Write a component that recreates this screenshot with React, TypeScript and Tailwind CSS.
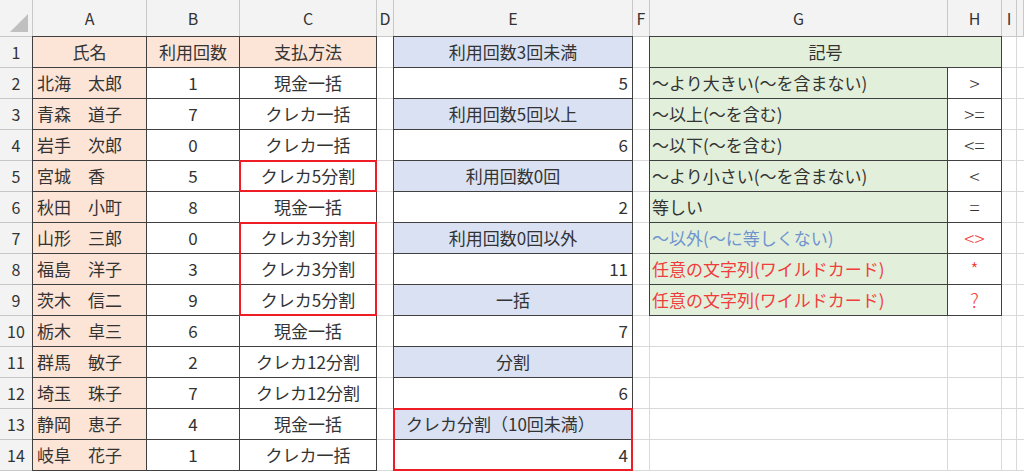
import React from "react";

const names = ["北海　太郎","青森　道子","岩手　次郎","宮城　香","秋田　小町","山形　三郎","福島　洋子","茨木　信二","栃木　卓三","群馬　敏子","埼玉　珠子","静岡　恵子","岐阜　花子"];
const counts = ["1","7","0","5","8","0","3","9","6","2","7","4","1"];
const pays = ["現金一括","クレカ一括","クレカ一括","クレカ5分割","現金一括","クレカ3分割","クレカ3分割","クレカ5分割","現金一括","クレカ12分割","クレカ12分割","現金一括","クレカ一括"];
const eCol: [string, boolean][] = [
  ["利用回数3回未満", true],["5", false],["利用回数5回以上", true],["6", false],["利用回数0回", true],["2", false],
  ["利用回数0回以外", true],["11", false],["一括", true],["7", false],["分割", true],["6", false],["クレカ分割（10回未満）", true],["4", false],
];
const gRows: [string, string, string][] = [
  ["〜より大きい(〜を含まない)", ">", "n"],
  ["〜以上(〜を含む)", ">=", "n"],
  ["〜以下(〜を含む)", "<=", "n"],
  ["〜より小さい(〜を含まない)", "<", "n"],
  ["等しい", "=", "n"],
  ["〜以外(〜に等しくない)", "<>", "b"],
  ["任意の文字列(ワイルドカード)", "*", "r"],
  ["任意の文字列(ワイルドカード)", "?", "r"],
];

const base = "border-r border-b border-[#d9d9d9] flex items-center overflow-hidden whitespace-nowrap";
const dark = "border-r border-b border-[#404040] flex items-center overflow-hidden whitespace-nowrap";
const hdr = "border-r border-b border-[#c8c8c8] bg-[#f3f3f3] flex items-center justify-center text-[16px] text-[#333]";

export default function App() {
  const cells: React.ReactNode[] = [];
  const cols = ["A","B","C","D","E","F","G","H","I",""];
  cells.push(<div key="corner" className={hdr + " relative"}><div className="absolute right-1 bottom-1 w-0 h-0 border-l-[18px] border-l-transparent border-b-[18px] border-b-[#c0c0c0]" /></div>);
  cols.forEach((c, i) => cells.push(<div key={"h" + i} className={hdr}>{c}</div>));
  for (let r = 1; r <= 14; r++) {
    cells.push(<div key={"r" + r} className={hdr}>{r}</div>);
    if (r === 1) {
      cells.push(<div key="a1" className={dark + " justify-center bg-[#fce4d6]"}>氏名</div>);
      cells.push(<div key="b1" className={dark + " justify-center bg-[#fce4d6]"}>利用回数</div>);
      cells.push(<div key="c1" className={dark + " justify-center bg-[#fce4d6]"}>支払方法</div>);
    } else {
      cells.push(<div key={"a" + r} className={dark + " pl-1 bg-[#fce4d6]"}>{names[r - 2]}</div>);
      cells.push(<div key={"b" + r} className={dark + " justify-center"}>{counts[r - 2]}</div>);
      cells.push(<div key={"c" + r} className={dark + " justify-center"}>{pays[r - 2]}</div>);
    }
    cells.push(<div key={"d" + r} className={base} />);
    const [et, eh] = eCol[r - 1];
    cells.push(
      <div key={"e" + r} className={dark + (eh ? (r === 13 ? " pl-3 bg-[#d9e1f2]" : " justify-center bg-[#d9e1f2]") : " justify-end pr-1")}>{et}</div>
    );
    cells.push(<div key={"f" + r} className={base} />);
    if (r === 1) {
      cells.push(<div key="g1" className={dark + " col-span-2 justify-center bg-[#e2efda]"}>記号</div>);
    } else if (r <= 9) {
      const [gt, ht, c] = gRows[r - 2];
      const color = c === "b" ? "text-[#6f93cf]" : c === "r" ? "text-[#f03c3c]" : "";
      const hcolor = c === "n" ? "" : "text-[#f03c3c]";
      cells.push(<div key={"g" + r} className={dark + " pl-0.5 bg-[#e2efda] " + color}>{gt}</div>);
      cells.push(<div key={"hh" + r} className={dark + " justify-center text-[19px] font-light " + hcolor}>{ht}</div>);
    } else {
      cells.push(<div key={"g" + r} className={base} />);
      cells.push(<div key={"hh" + r} className={base} />);
    }
    cells.push(<div key={"i" + r} className={base} />);
    cells.push(<div key={"j" + r} className="border-b border-[#d9d9d9]" />);
  }
  const frame = "absolute -top-px -left-px right-0 bottom-0 border border-[#404040] pointer-events-none";
  const red = "absolute -top-px -left-px right-0 bottom-0 border-2 border-[#ee1c25] pointer-events-none";
  return (
    <div className="w-[1024px] h-[476px] overflow-hidden bg-white text-[17px] text-[#333]" style={{ fontFamily: '"Noto Sans CJK JP", "Noto Sans", sans-serif' }}>
      <div className="relative grid grid-cols-[33px_114px_93px_137px_17px_239px_17px_298px_54px_15px_1fr] grid-rows-[37px_repeat(14,31px)]">
        {cells}
        <div className={frame + " col-start-2 col-end-5 row-start-2 row-end-16"} />
        <div className={frame + " col-start-6 col-end-7 row-start-2 row-end-16"} />
        <div className={frame + " col-start-8 col-end-10 row-start-2 row-end-11"} />
        <div className={red + " col-start-4 col-end-5 row-start-6 row-end-7"} />
        <div className={red + " col-start-4 col-end-5 row-start-8 row-end-11"} />
        <div className={red + " col-start-6 col-end-7 row-start-14 row-end-16"} />
      </div>
    </div>
  );
}
